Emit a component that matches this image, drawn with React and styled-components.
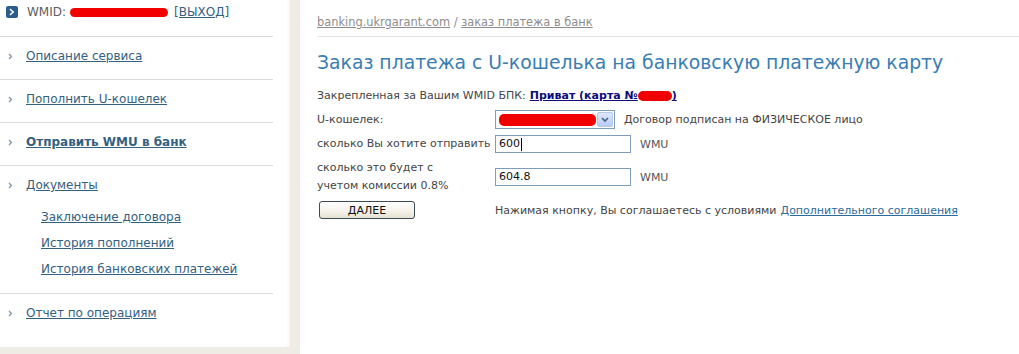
import React from "react";
import styled, { createGlobalStyle } from "styled-components";

const GlobalStyle = createGlobalStyle`
  html, body {
    margin: 0;
    padding: 0;
    background: #ffffff;
  }
  body {
    font-family: "DejaVu Sans", Verdana, sans-serif;
    color: #444;
  }
`;

const Page = styled.div`
  display: flex;
  width: 1019px;
  height: 354px;
  overflow: hidden;
`;

const SideColumn = styled.div`
  width: 300px;
  flex-shrink: 0;
  background: #eeece5;
  display: flex;
  flex-direction: column;
`;

const SidePanel = styled.div`
  width: 290px;
  height: 347px;
  background: linear-gradient(to right, #fff 0, #fff 286px, #f6f5f1 290px);
`;

const Menu = styled.ul`
  list-style: none;
  margin: 0;
  padding: 0;
  width: 273px;
`;

const Item = styled.li`
  border-top: ${(p) => (p.$first ? "none" : "1px solid #dcdcdc")};
  padding: ${(p) => (p.$first ? "4px 0 16px" : "11px 0 15px")};
  padding-bottom: ${(p) => (p.$sub ? "11px" : undefined)};
  display: flex;
  flex-direction: column;
`;

const Row = styled.div`
  display: flex;
  align-items: center;
  height: 16px;
  font-size: 12px;
  line-height: 16px;
`;

const Bullet = styled.span`
  width: 26px;
  display: flex;
  align-items: center;
  padding-left: 8px;
  box-sizing: border-box;
`;

const IconBullet = styled.span`
  width: 27px;
  display: flex;
  align-items: center;
  padding-left: 6px;
  box-sizing: border-box;
`;

const MenuLink = styled.a`
  color: #34607f;
  text-decoration: underline;
  font-weight: ${(p) => (p.$bold ? "bold" : "normal")};
  cursor: pointer;
`;

const Muted = styled.span`
  color: #606060;
`;

const Redact = styled.span`
  display: inline-block;
  width: ${(p) => p.$w}px;
  height: ${(p) => p.$h || 9}px;
  background: #f20000;
  border-radius: 5px;
  vertical-align: middle;
  margin: 0 ${(p) => p.$m || 0}px;
`;

const SubList = styled.ul`
  list-style: none;
  margin: 11px 0 0;
  padding: 0 0 0 41px;
`;

const SubItem = styled.li`
  height: 26px;
  display: flex;
  align-items: center;
  font-size: 12px;
`;

const Content = styled.main`
  flex: 1;
  padding: 14px 0 0 17px;
`;

const Breadcrumb = styled.div`
  font-size: 11.4px;
  line-height: 16px;
  color: #8d8d8d;
  padding-bottom: 6px;
  border-bottom: 1px solid #e2e2e2;
  a {
    color: #8d8d8d;
    text-decoration: underline;
  }
`;

const Title = styled.h1`
  margin: 14px 0 0;
  font-size: 18.8px;
  line-height: 24px;
  font-weight: normal;
  color: #3a7db2;
  white-space: nowrap;
`;

const Note = styled.div`
  margin-top: 13px;
  font-size: 11px;
  line-height: 16px;
  color: #444;
  display: flex;
  align-items: center;
`;

const BankLink = styled.a`
  color: #0c0c7c;
  font-weight: bold;
  text-decoration: underline;
  margin-left: 4px;
  display: inline-flex;
  align-items: center;
`;

const FormGrid = styled.div`
  margin-top: 6px;
  display: grid;
  grid-template-columns: 178px 1fr;
  row-gap: 6px;
  align-items: center;
  font-size: 11px;
  color: #444;
`;

const Label = styled.div`
  line-height: 18px;
  white-space: nowrap;
`;

const Field = styled.div`
  display: flex;
  align-items: center;
  gap: ${(p) => (p.$tight ? 0 : 9)}px;
  white-space: nowrap;
`;

const Select = styled.div`
  width: 120px;
  height: 19px;
  box-sizing: border-box;
  border: 1px solid #7f9db9;
  display: flex;
  align-items: center;
  justify-content: space-between;
  padding: 1px 1px 1px 2px;
`;

const DropButton = styled.span`
  width: 16px;
  height: 15px;
  background: linear-gradient(#dde8fb, #b7cbf3);
  border: 1px solid #b6c8ee;
  box-sizing: border-box;
  border-radius: 2px;
  display: flex;
  align-items: center;
  justify-content: center;
`;

const TextBox = styled.div`
  width: 136px;
  height: 18px;
  box-sizing: border-box;
  border: 1px solid #7f9db9;
  padding: 0 3px;
  font-size: 11px;
  line-height: 16px;
  color: #111;
  display: flex;
  align-items: center;
`;

const Caret = styled.span`
  width: 1px;
  height: 13px;
  background: #000;
  margin-left: 1px;
`;

const Unit = styled.span`
  color: #555;
`;

const Button = styled.button`
  margin-left: 2px;
  width: 96px;
  height: 18px;
  border: 1px solid #3d4a55;
  border-radius: 3px;
  background: linear-gradient(#ffffff, #f3f1e8 60%, #e6e2d2);
  font-family: "DejaVu Sans", Verdana, sans-serif;
  font-size: 11px;
  color: #111;
  padding: 0;
  cursor: pointer;
`;

const AgreeLink = styled.a`
  color: #2b6a99;
  text-decoration: underline;
  margin-left: 4px;
`;

const Chevron = () => (
  <svg width="5" height="7" viewBox="0 0 5 7">
    <path d="M1 1 L3.5 3.5 L1 6" fill="none" stroke="#7d93a6" strokeWidth="1.3" />
  </svg>
);

const WmIcon = () => (
  <svg width="12" height="12" viewBox="0 0 12 12">
    <rect width="12" height="12" rx="2" fill="#2a5e90" />
    <path d="M4 3 L7 6 L4 9" fill="none" stroke="#fff" strokeWidth="1.5" />
    <path d="M6.5 4.5 L8 6 L6.5 7.5" fill="none" stroke="#cfe0f0" strokeWidth="1" />
  </svg>
);

const menu = [
  { label: "Описание сервиса" },
  { label: "Пополнить U-кошелек" },
  { label: "Отправить WMU в банк", bold: true },
  {
    label: "Документы",
    sub: ["Заключение договора", "История пополнений", "История банковских платежей"],
  },
  { label: "Отчет по операциям" },
];

export default function App() {
  return (
    <Page>
      <GlobalStyle />
      <SideColumn>
        <SidePanel>
          <Menu>
            <Item $first>
              <Row>
                <IconBullet>
                  <WmIcon />
                </IconBullet>
                <Muted>WMID:</Muted>
                <Redact $w={98} $m={4} />
                <MenuLink style={{ marginLeft: 2 }}>[ВЫХОД]</MenuLink>
              </Row>
            </Item>
            {menu.map((m) => (
              <Item key={m.label} $sub={!!m.sub}>
                <Row>
                  <Bullet>
                    <Chevron />
                  </Bullet>
                  <MenuLink $bold={m.bold}>{m.label}</MenuLink>
                </Row>
                {m.sub && (
                  <SubList>
                    {m.sub.map((s) => (
                      <SubItem key={s}>
                        <MenuLink>{s}</MenuLink>
                      </SubItem>
                    ))}
                  </SubList>
                )}
              </Item>
            ))}
          </Menu>
        </SidePanel>
      </SideColumn>

      <Content>
        <Breadcrumb>
          <a>banking.ukrgarant.com</a> / <a>заказ платежа в банк</a>
        </Breadcrumb>
        <Title>Заказ платежа с U-кошелька на банковскую платежную карту</Title>
        <Note>
          Закрепленная за Вашим WMID БПК:
          <BankLink>
            Приват (карта №<Redact $w={34} $h={10} />)
          </BankLink>
        </Note>

        <FormGrid>
          <Label>U-кошелек:</Label>
          <Field>
            <Select>
              <Redact $w={98} $h={12} $m={1} />
              <DropButton>
                <svg width="8" height="6" viewBox="0 0 8 6">
                  <path d="M1 1 L4 4 L7 1" fill="none" stroke="#4d6185" strokeWidth="1.6" />
                </svg>
              </DropButton>
            </Select>
            <span>Договор подписан на ФИЗИЧЕСКОЕ лицо</span>
          </Field>

          <Label>сколько Вы хотите отправить</Label>
          <Field>
            <TextBox>
              600
              <Caret />
            </TextBox>
            <Unit>WMU</Unit>
          </Field>

          <Label>
            сколько это будет с
            <br />
            учетом комиссии 0.8%
          </Label>
          <Field>
            <TextBox>604.8</TextBox>
            <Unit>WMU</Unit>
          </Field>

          <div>
            <Button>ДАЛЕЕ</Button>
          </div>
          <Field $tight>
            Нажимая кнопку, Вы соглашаетесь с условиями
            <AgreeLink>Дополнительного соглашения</AgreeLink>
          </Field>
        </FormGrid>
      </Content>
    </Page>
  );
}
